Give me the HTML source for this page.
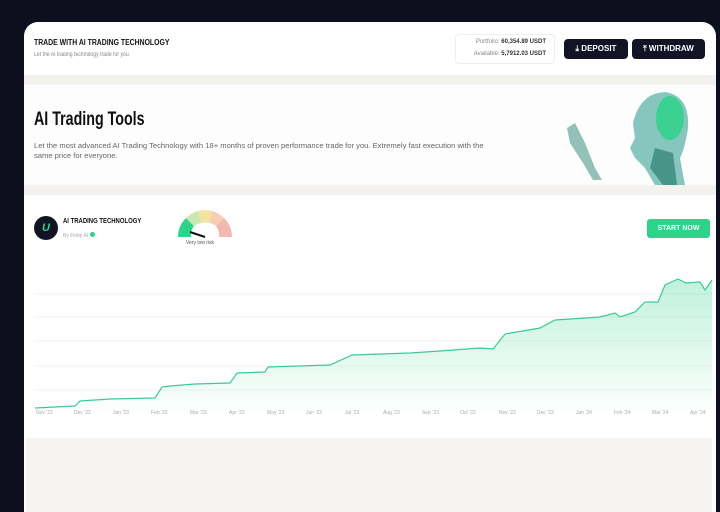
<!DOCTYPE html><html><head><style>
*{margin:0;padding:0;box-sizing:border-box}
body{width:720px;height:512px;background:#0e0f1e;font-family:"Liberation Sans",sans-serif;position:relative;overflow:hidden}
.panel{position:absolute;left:24px;top:22px;width:692px;height:490px;background:#fff;border-radius:14px 14px 0 0}
.b{font-weight:bold;color:#111}
.n{transform-origin:0 0;white-space:nowrap}
.btn{position:absolute;top:39px;height:20px;background:#121426;color:#fff;font-size:8px;font-weight:bold;border-radius:4px;display:flex;align-items:center;justify-content:center}
.m{position:absolute;top:410px;font-size:5px;color:#aaa}
</style></head><body>
<div class="panel"></div>
<div class="b n" style="position:absolute;left:34px;top:38px;font-size:8px;transform:scaleX(.86)">TRADE WITH AI TRADING TECHNOLOGY</div>
<div class="n" style="position:absolute;left:34px;top:52px;font-size:6px;color:#888;transform:scaleX(.85)">Let the AI trading technology trade for you.</div>
<div style="position:absolute;left:455px;top:34px;width:100px;height:30px;border:1px solid #eee;border-radius:4px"></div>
<div style="position:absolute;left:462px;top:39px;font-size:6px;color:#888;width:84px;text-align:right">Portfolio: <b style="color:#333">60,354.89 USDT</b></div>
<div style="position:absolute;left:462px;top:51px;font-size:6px;color:#888;width:84px;text-align:right">Available: <b style="color:#333">5,7912.03 USDT</b></div>
<div class="btn" style="left:564px;width:64px">⤓ DEPOSIT</div>
<div class="btn" style="left:632px;width:73px">⤒ WITHDRAW</div>
<div style="position:absolute;left:24px;top:75px;width:692px;height:10px;background:#f3f2ef"></div>
<div style="position:absolute;left:24px;top:85px;width:692px;height:100px;background:#fdfdfd"></div>
<div class="n" style="position:absolute;left:34px;top:109px;font-size:19px;font-weight:bold;color:#111;transform:scaleX(.75)">AI Trading Tools</div>
<div class="n" style="position:absolute;left:34px;top:141px;font-size:7.6px;line-height:10px;color:#666">Let the most advanced AI Trading Technology with 18+ months of proven performance trade for you. Extremely fast execution with the<br>same price for everyone.</div>
<svg style="position:absolute;left:555px;top:88px" width="140" height="97"><path d="M100 97 L90 80 L80 70 L75 60 L80 50 L78 35 Q85 5 110 4 Q135 8 133 40 Q130 60 125 70 L130 97Z" fill="#5fb3a8" opacity=".75"/><ellipse cx="115" cy="30" rx="14" ry="22" fill="#2ed38a" opacity=".85"/><path d="M100 60 L95 80 L108 97 L122 97 L118 65Z" fill="#2c7f70" opacity=".7"/><path d="M12 40 L20 35 L30 55 L40 80 L47 92 L38 92 L28 75 L15 55Z" fill="#4a9a88" opacity=".6"/></svg>
<div style="position:absolute;left:24px;top:185px;width:692px;height:10px;background:#f3f2ef"></div>
<div style="position:absolute;left:34px;top:216px;width:24px;height:24px;border-radius:50%;background:#121426;color:#2ed38a;font-size:11px;font-weight:bold;text-align:center;line-height:24px;font-style:italic">U</div>
<div class="b n" style="position:absolute;left:63px;top:218px;font-size:7px;transform:scaleX(.85)">AI TRADING TECHNOLOGY</div>
<div class="n" style="position:absolute;left:63px;top:232px;font-size:5px;color:#aaa">By Fintip AI <span style="display:inline-block;width:5px;height:5px;background:#2ed38a;border-radius:50%"></span></div>
<svg style="position:absolute;left:176px;top:207px" width="58" height="32"><path d="M2 30 A27 27 0 0 1 10 11 L18 19 A15 15 0 0 0 15 30Z" fill="#2ed38a"/><path d="M10 11 A27 27 0 0 1 22 4 L25 16 A15 15 0 0 0 18 19Z" fill="#c9e7b0"/><path d="M22 4 A27 27 0 0 1 36 4 L33 16 A15 15 0 0 0 25 16Z" fill="#f4e3a0"/><path d="M36 4 A27 27 0 0 1 48 11 L40 19 A15 15 0 0 0 33 16Z" fill="#f5cfb0"/><path d="M48 11 A27 27 0 0 1 56 30 L43 30 A15 15 0 0 0 40 19Z" fill="#f3b8b0"/><line x1="29" y1="30" x2="14" y2="25" stroke="#111" stroke-width="2"/></svg>
<div style="position:absolute;left:186px;top:240px;font-size:5px;color:#555">Very low risk</div>
<div style="position:absolute;left:647px;top:219px;width:63px;height:19px;background:#2ed38a;border-radius:3px;color:#fff;font-size:7px;font-weight:bold;text-align:center;line-height:19px">START NOW</div>
<svg style="position:absolute;left:0;top:0" width="720" height="512">
<defs><linearGradient id="g" x1="0" y1="0" x2="0" y2="1"><stop offset="0" stop-color="#2ed38a" stop-opacity=".3"/><stop offset="1" stop-color="#2ed38a" stop-opacity=".02"/></linearGradient></defs>
<g stroke="#f2f2f2" stroke-width="1"><line x1="34" y1="294" x2="712" y2="294"/><line x1="34" y1="317" x2="712" y2="317"/><line x1="34" y1="341" x2="712" y2="341"/><line x1="34" y1="366" x2="712" y2="366"/><line x1="34" y1="390" x2="712" y2="390"/></g>
<path d="M35 408 L55 407 L75 406 L80 401 L110 399 L155 398 L162 387 L170 386 L195 384 L230 383 L237 373 L265 372 L268 367 L330 365 L352 355 L410 353 L440 351 L480 348 L493 349 L505 334 L540 328 L555 320 L600 317 L615 313 L620 317 L635 312 L645 302 L658 302 L665 285 L678 279 L686 283 L700 282 L705 290 L712 280 L712 410 L35 410Z" fill="url(#g)"/>
<path d="M35 408 L55 407 L75 406 L80 401 L110 399 L155 398 L162 387 L170 386 L195 384 L230 383 L237 373 L265 372 L268 367 L330 365 L352 355 L410 353 L440 351 L480 348 L493 349 L505 334 L540 328 L555 320 L600 317 L615 313 L620 317 L635 312 L645 302 L658 302 L665 285 L678 279 L686 283 L700 282 L705 290 L712 280" fill="none" stroke="#3cc99a" stroke-width="1.2"/>
</svg>
<div class="m" style="left:36px">Nov '22</div><div class="m" style="left:74px">Dec '22</div><div class="m" style="left:113px">Jan '23</div><div class="m" style="left:151px">Feb '23</div><div class="m" style="left:190px">Mar '23</div><div class="m" style="left:229px">Apr '23</div><div class="m" style="left:267px">May '23</div><div class="m" style="left:306px">Jun '23</div><div class="m" style="left:345px">Jul '23</div><div class="m" style="left:383px">Aug '23</div><div class="m" style="left:422px">Sep '23</div><div class="m" style="left:460px">Oct '23</div><div class="m" style="left:499px">Nov '23</div><div class="m" style="left:537px">Dec '23</div><div class="m" style="left:576px">Jan '24</div><div class="m" style="left:614px">Feb '24</div><div class="m" style="left:652px">Mar '24</div><div class="m" style="left:690px">Apr '24</div>
<div style="position:absolute;left:26px;top:438px;width:686px;height:74px;background:#f5f4f1"></div>
</body></html>
